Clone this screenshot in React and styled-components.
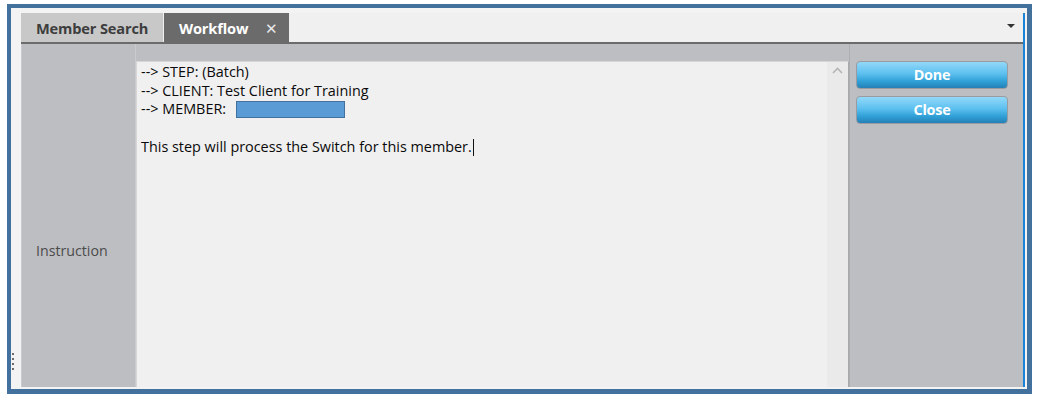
import React from "react";
import styled, { createGlobalStyle } from "styled-components";

const Global = createGlobalStyle`
  html, body { margin: 0; padding: 0; background: #ffffff; }
  body { font-family: "Open Sans", "Noto Sans", sans-serif; }
`;

const Frame = styled.div`
  position: relative;
  box-sizing: border-box;
  margin: 4px 0 0 7px;
  width: 1025px;
  height: 390px;
  border-style: solid;
  border-color: #41719c;
  border-width: 4px 5px 5px 4px;
  padding: 5px 2px 2px 10px;
  background: #f3f3f3;
  display: flex;
`;

const Grip = styled.div`
  position: absolute;
  left: 1px;
  top: 345px;
  display: flex;
  flex-direction: column;
  gap: 3px;
  span {
    display: block;
    width: 2px;
    height: 2px;
    background: #6b6b6b;
  }
`;

const Window = styled.div`
  flex: 1;
  display: flex;
  flex-direction: column;
  border-right: 2px solid #1883d7;
  background: #bdbec2;
  overflow: hidden;
`;

const TabBar = styled.div`
  height: 29px;
  flex: none;
  display: flex;
  align-items: stretch;
  background: #f0f0f0;
  border-bottom: 2px solid #6b6b6b;
`;

const Tab = styled.div`
  display: flex;
  align-items: center;
  box-sizing: border-box;
  width: ${(p) => p.$w}px;
  padding-left: 15px;
  font-weight: 700;
  font-size: 14.6px;
  color: ${(p) => (p.$active ? "#ffffff" : "#3d3d3d")};
  background: ${(p) => (p.$active ? "#6b6b6b" : "#c8c8c8")};
  margin-right: ${(p) => (p.$active ? 0 : 1)}px;
  letter-spacing: -0.15px;
`;

const CloseX = styled.span`
  margin-left: 17px;
  font-weight: 400;
  font-size: 15px;
  color: #e8e8e8;
`;

const Spacer = styled.div`
  flex: 1;
`;

const DropArrow = styled.div`
  align-self: center;
  margin-right: 8px;
  margin-top: -4px;
  width: 0;
  height: 0;
  border-left: 4px solid transparent;
  border-right: 4px solid transparent;
  border-top: 4px solid #333333;
`;

const Body = styled.div`
  flex: 1;
  display: flex;
  min-height: 0;
`;

const LabelColumn = styled.div`
  box-sizing: border-box;
  width: 115px;
  flex: none;
  border-left: 1px solid #c9cacd;
  border-right: 1px solid #c9cacd;
  padding: 197px 0 0 14px;
  font-size: 14.2px;
  color: #4b4b4b;
`;

const EditorWrap = styled.div`
  flex: none;
  width: 713px;
  padding-top: 17px;
  display: flex;
`;

const Editor = styled.div`
  flex: 1;
  display: flex;
  box-sizing: border-box;
  height: 400px;
  background: #f0f0f0;
  border: 1px solid #d6d6d6;
  border-right-color: #a9a9a9;
`;

const Text = styled.div`
  flex: 1;
  padding: 1px 0 0 4px;
  font-size: 14.4px;
  line-height: 18.7px;
  color: #0a0a0a;
`;

const Line = styled.div`
  height: 18.7px;
  display: flex;
  align-items: center;
  white-space: pre;
`;

const Redact = styled.span`
  display: inline-block;
  width: 107px;
  height: 15px;
  margin-left: 10px;
  background: #5b9bd5;
  border: 1px solid #41719c;
`;

const Caret = styled.span`
  display: inline-block;
  width: 1px;
  height: 17px;
  margin-left: 1px;
  background: #111;
`;

const ScrollStrip = styled.div`
  width: 21px;
  flex: none;
  background: #eaeaea;
  display: flex;
  justify-content: center;
  padding-top: 5px;
`;

const Actions = styled.div`
  flex: 1;
  display: flex;
  flex-direction: column;
  gap: 7px;
  padding: 17px 15px 0 6px;
  border-left: 1px solid #adaeb1;
`;

const Button = styled.button`
  box-sizing: border-box;
  width: 152px;
  height: 28px;
  border: 1px solid #9a9ba0;
  border-radius: 4px;
  background: linear-gradient(#93d8f8 0%, #5cc0ef 45%, #2f9fd6 75%, #2580b6 100%);
  color: #ffffff;
  font-family: "Open Sans", "Noto Sans", sans-serif;
  font-weight: 700;
  font-size: 14.4px;
  letter-spacing: -0.2px;
  padding: 0 0 1px;
  cursor: pointer;
`;

export default function App() {
  return (
    <>
      <Global />
      <Frame>
        <Grip>
          <span />
          <span />
          <span />
          <span />
        </Grip>
        <Window>
          <TabBar>
            <Tab $w={142}>Member Search</Tab>
            <Tab $w={125} $active>
              Workflow<CloseX>✕</CloseX>
            </Tab>
            <Spacer />
            <DropArrow />
          </TabBar>
          <Body>
            <LabelColumn>Instruction</LabelColumn>
            <EditorWrap>
              <Editor>
                <Text>
                  <Line>--&gt; STEP: (Batch)</Line>
                  <Line>--&gt; CLIENT: Test Client for Training</Line>
                  <Line>
                    --&gt; MEMBER:
                    <Redact />
                  </Line>
                  <Line />
                  <Line>
                    This step will process the Switch for this member.
                    <Caret />
                  </Line>
                </Text>
                <ScrollStrip>
                  <svg width="11" height="7" viewBox="0 0 11 7">
                    <path d="M1 6 L5.5 1.5 L10 6" fill="none" stroke="#b5b5b5" strokeWidth="1.6" />
                  </svg>
                </ScrollStrip>
              </Editor>
            </EditorWrap>
            <Actions>
              <Button>Done</Button>
              <Button>Close</Button>
            </Actions>
          </Body>
        </Window>
      </Frame>
    </>
  );
}
